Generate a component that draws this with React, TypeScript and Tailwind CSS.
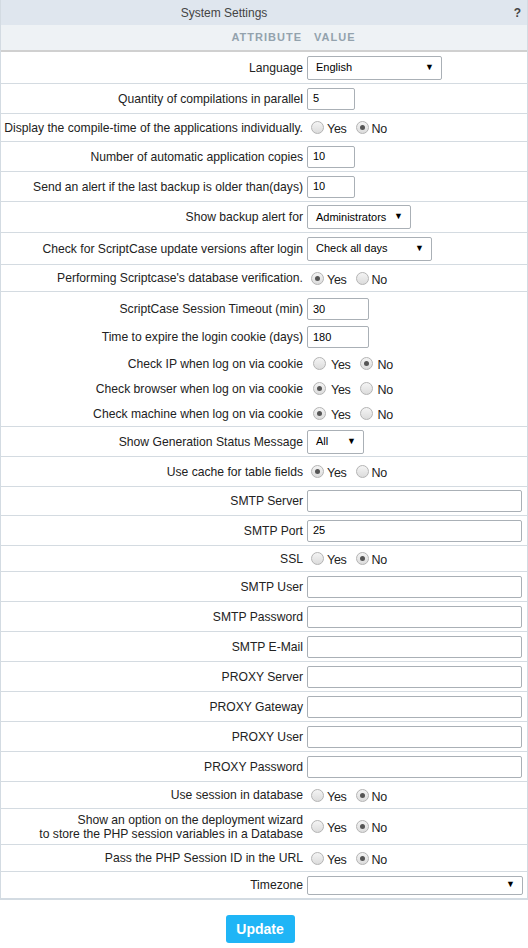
import React from "react";

function Radio({ on }: { on: boolean }) {
  return (
    <span className="inline-flex h-[13px] w-[13px] shrink-0 items-center justify-center rounded-full border border-[#b4b4b4] bg-gradient-to-b from-[#f4f4f4] to-[#dcdcdc]">
      {on && <span className="h-[5px] w-[5px] rounded-full bg-[#555]" />}
    </span>
  );
}

function YesNo({ yes, wide }: { yes: boolean; wide?: boolean }) {
  return (
    <div className={"flex items-center " + (wide ? "gap-[5px] pl-[6px]" : "gap-[3px] pl-[4px]")}>
      <Radio on={yes} />
      <span className={"mt-[4px] text-[12.5px] tracking-[-0.3px] text-[#222] " + (wide ? "mr-[4px]" : "mr-[6px]")}>Yes</span>
      <Radio on={!yes} />
      <span className="mt-[4px] text-[12.5px] tracking-[-0.3px] text-[#222]">No</span>
    </div>
  );
}

function Select({ value, w, h = "h-[24px]" }: { value: string; w: string; h?: string }) {
  return (
    <div className={`flex ${w} ${h} items-center justify-between rounded-[2px] border border-[#aab0b6] bg-white pl-[8px] pr-[7px] text-[11px] text-black`}>
      <span>{value}</span>
      <span className="text-[9px]">▼</span>
    </div>
  );
}

function Input({ value, w }: { value: string; w: string }) {
  return (
    <div className={`flex ${w} h-[22px] items-center rounded-[2px] border border-[#aab0b6] bg-white pl-[5px] text-[11px] text-black`}>
      {value}
    </div>
  );
}

function Row({ label, children, h, last }: { label: React.ReactNode; children: React.ReactNode; h: string; last?: boolean }) {
  return (
    <div className={`flex ${h} items-center ${last ? "" : "border-b border-[#d4dbe1]"}`}>
      <div className="w-[303px] shrink-0 pr-[1px] text-right text-[12.15px] leading-[14px] text-[#222]">{label}</div>
      <div className="flex flex-1 items-center pl-[3px]">{children}</div>
    </div>
  );
}

export default function App() {
  return (
    <div className="min-h-[948px] w-[528px] bg-white font-['Liberation_Sans',Arial,sans-serif]">
      <div className="border-x border-b-2 border-[#d3dbe2]">
        <div className="flex h-[25px] items-center bg-[#dfe6ee]">
          <div className="flex-1 text-center text-[12px] text-[#444]">System Settings</div>
          <div className="w-[80px] pr-[6px] text-right text-[12px] font-bold text-[#444]">?</div>
        </div>
        <div className="flex h-[27px] items-center border-b-2 border-[#d0d0d0] bg-[#eef2f5] text-[11px] font-bold tracking-[1px] text-[#93a2ad]">
          <div className="w-[301px] text-right">ATTRIBUTE</div>
          <div className="pl-[12px]">VALUE</div>
        </div>

        <Row label="Language" h="h-[32px]"><Select value="English" w="w-[135px]" /></Row>
        <Row label="Quantity of compilations in parallel" h="h-[30px]"><Input value="5" w="w-[48px]" /></Row>
        <Row label="Display the compile-time of the applications individually." h="h-[28px]"><YesNo yes={false} /></Row>
        <Row label="Number of automatic application copies" h="h-[30px]"><Input value="10" w="w-[48px]" /></Row>
        <Row label="Send an alert if the last backup is older than(days)" h="h-[30px]"><Input value="10" w="w-[48px]" /></Row>
        <Row label="Show backup alert for" h="h-[31px]"><Select value="Administrators" w="w-[104px]" /></Row>
        <Row label="Check for ScriptCase update versions after login" h="h-[32px]"><Select value="Check all days" w="w-[125px]" /></Row>
        <Row label="Performing Scriptcase's database verification." h="h-[27px]"><YesNo yes /></Row>

        <div className="flex flex-col border-b border-[#d4dbe1] pt-[3px]">
          <Row label="ScriptCase Session Timeout (min)" h="h-[28px]" last><Input value="30" w="w-[62px]" /></Row>
          <Row label="Time to expire the login cookie (days)" h="h-[28px]" last><Input value="180" w="w-[62px]" /></Row>
          <Row label="Check IP when log on via cookie" h="h-[25px]" last><YesNo yes={false} wide /></Row>
          <Row label="Check browser when log on via cookie" h="h-[25px]" last><YesNo yes wide /></Row>
          <Row label="Check machine when log on via cookie" h="h-[25px]" last><YesNo yes wide /></Row>
        </div>

        <Row label="Show Generation Status Message" h="h-[30px]"><Select value="All" w="w-[57px]" /></Row>
        <Row label="Use cache for table fields" h="h-[30px]"><YesNo yes /></Row>
        <Row label="SMTP Server" h="h-[29px]"><Input value="" w="w-[215px]" /></Row>
        <Row label="SMTP Port" h="h-[30px]"><Input value="25" w="w-[215px]" /></Row>
        <Row label="SSL" h="h-[26px]"><YesNo yes={false} /></Row>
        <Row label="SMTP User" h="h-[30px]"><Input value="" w="w-[215px]" /></Row>
        <Row label="SMTP Password" h="h-[30px]"><Input value="" w="w-[215px]" /></Row>
        <Row label="SMTP E-Mail" h="h-[30px]"><Input value="" w="w-[215px]" /></Row>
        <Row label="PROXY Server" h="h-[30px]"><Input value="" w="w-[215px]" /></Row>
        <Row label="PROXY Gateway" h="h-[30px]"><Input value="" w="w-[215px]" /></Row>
        <Row label="PROXY User" h="h-[30px]"><Input value="" w="w-[215px]" /></Row>
        <Row label="PROXY Password" h="h-[30px]"><Input value="" w="w-[215px]" /></Row>
        <Row label="Use session in database" h="h-[27px]"><YesNo yes={false} /></Row>
        <Row
          label={
            <>
              Show an option on the deployment wizard
              <br />
              to store the PHP session variables in a Database
            </>
          }
          h="h-[36px]"
        >
          <YesNo yes={false} />
        </Row>
        <Row label="Pass the PHP Session ID in the URL" h="h-[27px]"><YesNo yes={false} /></Row>
        <Row label="Timezone" h="h-[26px]" last><Select value="" w="w-[216px]" h="h-[19px]" /></Row>
      </div>

      <div className="flex justify-center pt-[15px]">
        <button type="button" className="ml-[-8px] h-[28px] w-[69px] rounded-[3px] bg-[#1fb5f6] text-[14px] font-bold text-white">
          Update
        </button>
      </div>
    </div>
  );
}
